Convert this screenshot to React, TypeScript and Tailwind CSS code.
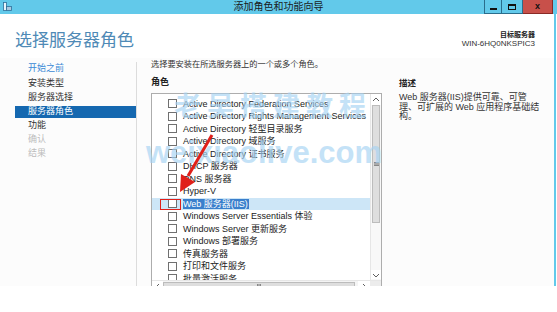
import React from 'react';

const roles = [
  'Active Directory Federation Services',
  'Active Directory Rights Management Services',
  'Active Directory 轻型目录服务',
  'Active Directory 域服务',
  'Active Directory 证书服务',
  'DHCP 服务器',
  'DNS 服务器',
  'Hyper-V',
  'Web 服务器(IIS)',
  'Windows Server Essentials 体验',
  'Windows Server 更新服务',
  'Windows 部署服务',
  '传真服务器',
  '打印和文件服务',
  '批量激活服务',
];

const steps = [
  { label: '开始之前', state: 'link' },
  { label: '安装类型', state: 'done' },
  { label: '服务器选择', state: 'done' },
  { label: '服务器角色', state: 'current' },
  { label: '功能', state: 'done' },
  { label: '确认', state: 'disabled' },
  { label: '结果', state: 'disabled' },
];

function Chevron({ dir }: { dir: 'up' | 'down' | 'left' | 'right' }) {
  const d = {
    up: 'M2 6 L5 3 L8 6',
    down: 'M2 4 L5 7 L8 4',
    left: 'M6 2 L3 5 L6 8',
    right: 'M4 2 L7 5 L4 8',
  }[dir];
  return (
    <svg width="10" height="10" viewBox="0 0 10 10">
      <path d={d} fill="none" stroke="#606060" strokeWidth={1} />
    </svg>
  );
}

export default function App() {
  return (
    <div
      className="relative w-[557px] h-[312px] bg-white overflow-hidden text-[#1e1e1e]"
      style={{ fontFamily: '"Liberation Sans", "Noto Sans CJK SC", sans-serif' }}
    >
      <div className="flex flex-col h-[286px] overflow-hidden">
        {/* title bar */}
        <div className="relative h-[14px] bg-[#62c9ea] flex items-center justify-center shrink-0">
          <svg className="absolute left-[3px] top-[2px]" width="9" height="10" viewBox="0 0 9 10">
            <rect x="0.5" y="0.5" width="3" height="8" fill="#e8f4fb" stroke="#2e6f9a" strokeWidth={0.8} />
            <rect x="3.5" y="4.5" width="5" height="4" fill="#a9c9e0" stroke="#2e6f9a" strokeWidth={0.8} />
          </svg>
          <span className="text-[10px] leading-none text-[#1a1a1a]">添加角色和功能向导</span>
          <div className="absolute right-[4px] top-0 flex h-[14px]">
            <div className="w-[18px] h-full border border-t-0 border-[#2a6d8c] flex items-end justify-center pb-[3px]">
              <div className="w-[7px] h-[2px] bg-[#111]" />
            </div>
            <div className="w-[21px] h-full border border-t-0 border-l-0 border-[#2a6d8c] flex items-center justify-center">
              <div className="w-[8px] h-[6px] border-[1.5px] border-t-2 border-[#111]" />
            </div>
            <div className="w-[30px] h-full bg-[#c8504a] border border-t-0 border-l-0 border-[#8a2a26] flex items-center justify-center">
              <span className="text-[9px] font-bold leading-none text-[#111]">x</span>
            </div>
          </div>
        </div>

        <div className="flex-1 flex flex-col w-[556px] border-r-2 border-[#62c9ea] bg-[#fcfcfc]">
          {/* header */}
          <div className="h-[44px] bg-white flex items-start justify-between shrink-0">
            <h1 className="pl-[15px] pt-[18px] text-[17px] leading-[18px] font-normal text-[#4f8ab6]">
              选择服务器角色
            </h1>
            <div className="pr-[19px] pt-[17px] text-right">
              <div className="text-[7px] leading-[8px] font-bold text-[#222]">目标服务器</div>
              <div className="text-[8px] leading-[9px] text-[#333]">WIN-6HQ0NKSPIC3</div>
            </div>
          </div>

          {/* body */}
          <div className="flex-1 flex min-h-0">
            <nav className="w-[137px] mt-[4px] border-r border-[#dcdcdc] shrink-0 text-[9px]">
              {steps.map((s) => (
                <div key={s.label} className="h-[14.2px] flex items-center">
                  {s.state === 'current' ? (
                    <div className="ml-[15px] w-full h-[12px] bg-[#1568b0] text-white pl-[13px] flex items-center">
                      {s.label}
                    </div>
                  ) : (
                    <div
                      className={`pl-[28px] ${
                        s.state === 'link'
                          ? 'text-[#3b8ad6]'
                          : s.state === 'disabled'
                          ? 'text-[#bdbdbd]'
                          : 'text-[#333]'
                      }`}
                    >
                      {s.label}
                    </div>
                  )}
                </div>
              ))}
            </nav>

            <div className="w-[247px] pl-[14px] shrink-0 flex flex-col">
              <p className="h-[14px] flex items-center text-[8.2px] text-[#333] whitespace-nowrap">
                选择要安装在所选服务器上的一个或多个角色。
              </p>
              <p className="mt-[4px] h-[14px] flex items-center text-[9px] font-bold text-[#222]">角色</p>
              <div className="mt-[3px] w-[231px] border border-[#adadad] bg-white flex flex-col shrink-0">
                <div className="flex h-[186px]">
                  <div className="flex-1 pt-[3.5px] overflow-hidden">
                    {roles.map((r) => {
                      const selected = r === 'Web 服务器(IIS)';
                      return (
                        <div
                          key={r}
                          className={`relative h-[12.5px] flex items-center pl-[16px] text-[9px] whitespace-nowrap ${
                            selected ? 'bg-[#cde6f7]' : ''
                          }`}
                        >
                          <div className="w-[9px] h-[9px] border border-[#707070] bg-white shrink-0" />
                          <span
                            className={`ml-[6px] leading-[10px] ${
                              selected ? 'bg-[#3a7fcc] text-white pr-[1px]' : 'text-[#222]'
                            }`}
                          >
                            {r}
                          </span>
                          {selected && (
                            <div className="absolute left-[8px] top-[1px] w-[21px] h-[11px] border-[1.5px] border-[#e0201a]" />
                          )}
                        </div>
                      );
                    })}
                  </div>
                  {/* vertical scrollbar */}
                  <div className="w-[11px] flex flex-col border-l border-[#e6e6e6] bg-[#f8f8f8]">
                    <div className="h-[11px] flex items-center justify-center bg-white">
                      <Chevron dir="up" />
                    </div>
                    <div className="h-[118px] mx-[1px] bg-[#dedede] border border-[#bcbcbc] flex items-center justify-center">
                      <div className="w-[5px] h-[4px] border-y border-[#888] bg-[#aaa]" />
                    </div>
                    <div className="flex-1" />
                    <div className="h-[9px] mb-[1px] flex items-center justify-center bg-white">
                      <Chevron dir="down" />
                    </div>
                  </div>
                </div>
                {/* horizontal scrollbar */}
                <div className="flex h-[12px] border-t border-[#e6e6e6] bg-[#f4f4f4]">
                  <div className="w-[11px] flex items-center justify-center bg-white">
                    <Chevron dir="left" />
                  </div>
                  <div className="w-[192px] my-[1px] bg-[#dedede] border border-[#bcbcbc] flex items-center justify-center">
                    <div className="w-[4px] h-[5px] border-x border-[#888] bg-[#aaa]" />
                  </div>
                  <div className="flex-1" />
                  <div className="w-[12px] flex items-center justify-center bg-white">
                    <Chevron dir="right" />
                  </div>
                  <div className="w-[11px] bg-[#ececec]" />
                </div>
              </div>
            </div>

            <div className="flex-1 pl-[15px] pt-[18px]">
              <p className="h-[14px] flex items-center text-[8.5px] font-bold text-[#222]">描述</p>
              <p className="mt-[3px] text-[9px] leading-[9.7px] text-[#333] whitespace-nowrap">
                Web 服务器(IIS)提供可靠、可管
                <br />
                理、可扩展的 Web 应用程序基础结
                <br />
                构。
              </p>
            </div>
          </div>
        </div>
      </div>

      {/* watermark */}
      <div className="absolute left-[174px] top-[92px] text-[27px] leading-[30px] font-bold tracking-[6px] text-[#a6d3f3] opacity-65 whitespace-nowrap pointer-events-none">
        老吴搭建教程
      </div>
      <div className="absolute left-[146px] top-[136px] text-[31px] leading-[34px] font-bold text-[#a6d3f3] opacity-65 whitespace-nowrap pointer-events-none">
        weixiaolive.com
      </div>

      {/* red arrow */}
      <svg className="absolute left-0 top-0 pointer-events-none" width="557" height="312" viewBox="0 0 557 312">
        <line x1="212" y1="135" x2="188" y2="176" stroke="#e0201a" strokeWidth={3} />
        <polygon points="180,192 181,174 195,182" fill="#e0201a" />
      </svg>
    </div>
  );
}
